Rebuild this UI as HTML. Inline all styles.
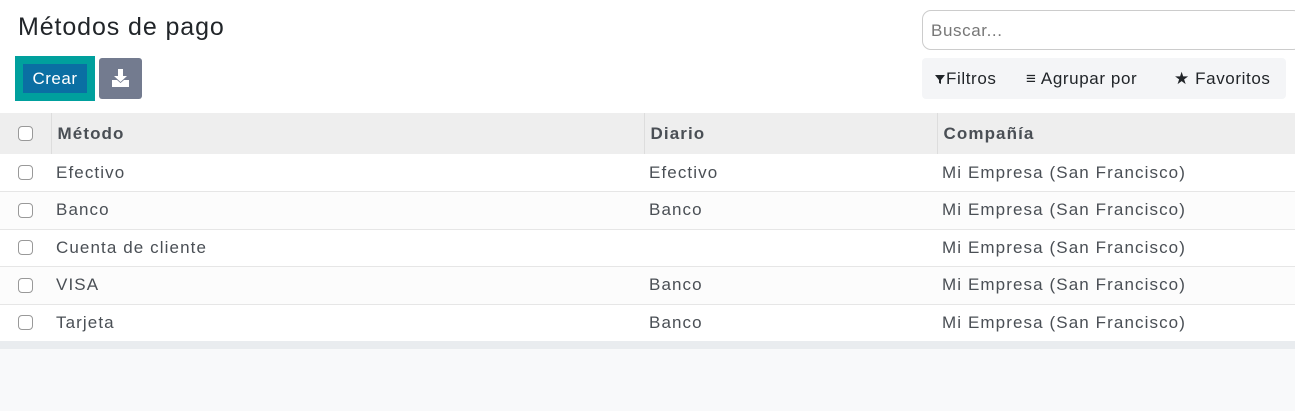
<html><head><style>
*{margin:0;padding:0;box-sizing:border-box}
body{width:1295px;height:411px;background:#f8f9fa;font-family:"Liberation Sans",sans-serif;color:#4a4f55;position:relative;overflow:hidden}
.top{position:absolute;left:0;top:0;width:1295px;height:113px;background:#fff}
h1{position:absolute;left:18px;top:13px;font-size:25px;font-weight:normal;color:#212529;letter-spacing:0.9px}
.crear{position:absolute;left:15px;top:56px;width:80px;height:45px;background:#00a09d}
.crear div{position:absolute;left:8px;top:8px;width:64px;height:29px;background:#0a6fa3;color:#fff;font-size:17px;text-align:center;line-height:29px;letter-spacing:0.5px}
.dl{position:absolute;left:99px;top:58px;width:43px;height:41px;background:#737b8f;border-radius:3px}
.search{position:absolute;left:922px;top:10px;width:380px;height:40px;border:1px solid #ccc;border-radius:9px;font-size:17px;color:#777;padding:10px 8px;letter-spacing:0.6px}
.fb{position:absolute;left:922px;top:58px;width:364px;height:41px;background:#f4f5f7;border-radius:4px;font-size:17px;color:#212529;line-height:41px;letter-spacing:0.6px}
.fb span{position:absolute}
table{position:absolute;left:0;top:113px;width:1295px;border-collapse:collapse;font-size:17px;letter-spacing:1.1px}
th{height:41px;background:#eee;text-align:left;font-weight:bold;color:#4a4f55;padding-left:6px;border-left:1px solid #ddd}
td{height:37.5px;padding-left:5px;border-bottom:1px solid #e6e6e6;background:#fff}
tr:nth-child(odd) td{background:#fcfcfc}
.cb{width:51px;padding-left:18px;border-left:none}
.box{width:15px;height:15px;border:1px solid #999;border-radius:4px;background:#fff}
.band{position:absolute;left:0;top:341px;width:1295px;height:8px;background:#e9ecef}
</style></head><body>
<div class="top"></div>
<h1>Métodos de pago</h1>
<div class="crear"><div>Crear</div></div>
<div class="dl"><svg width="43" height="41"><path d="M19 11h5v7h4l-6.5 6-6.5-6h4z" fill="#fff"/><path d="M13 22h5l3.5 3 3.5-3h5v7H13z" fill="#fff"/></svg></div>
<div class="search">Buscar...</div>
<div class="fb"><span style="left:12px"><svg width="12" height="12" style="vertical-align:-1px"><path d="M1 2h10L7 7v4L5 10V7z" fill="#212529"/></svg>Filtros</span><span style="left:104px">≡ Agrupar por</span><span style="left:252px">★ Favoritos</span></div>
<table>
<tr><th class="cb"><div class="box"></div></th><th style="width:593px">Método</th><th style="width:293px">Diario</th><th>Compañía</th></tr>
<tr><td class="cb"><div class="box"></div></td><td>Efectivo</td><td>Efectivo</td><td>Mi Empresa (San Francisco)</td></tr>
<tr><td class="cb"><div class="box"></div></td><td>Banco</td><td>Banco</td><td>Mi Empresa (San Francisco)</td></tr>
<tr><td class="cb"><div class="box"></div></td><td>Cuenta de cliente</td><td></td><td>Mi Empresa (San Francisco)</td></tr>
<tr><td class="cb"><div class="box"></div></td><td>VISA</td><td>Banco</td><td>Mi Empresa (San Francisco)</td></tr>
<tr><td class="cb"><div class="box"></div></td><td>Tarjeta</td><td>Banco</td><td>Mi Empresa (San Francisco)</td></tr>
</table>
<div class="band"></div>
</body></html>
